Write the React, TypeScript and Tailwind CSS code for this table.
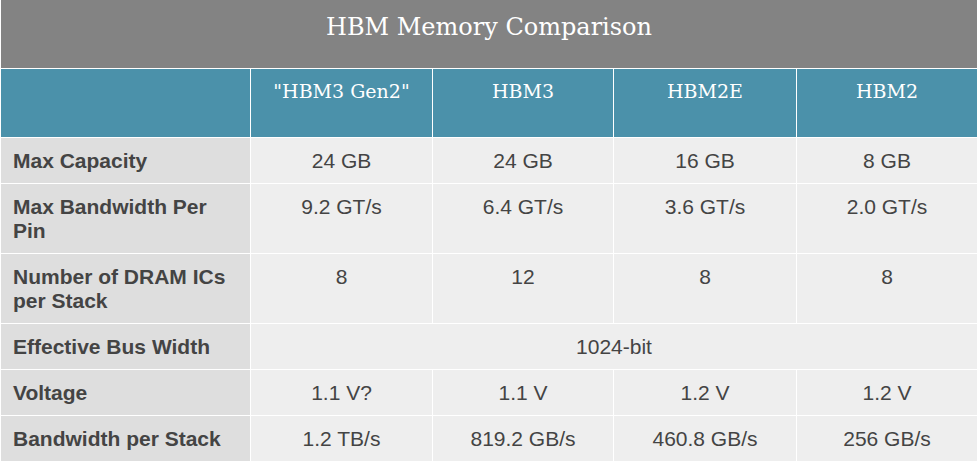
import React from 'react';

const columns = ['"HBM3 Gen2"', 'HBM3', 'HBM2E', 'HBM2'];

const rows: { label: string; values: string[] }[] = [
  { label: 'Max Capacity', values: ['24 GB', '24 GB', '16 GB', '8 GB'] },
  { label: 'Max Bandwidth Per Pin', values: ['9.2 GT/s', '6.4 GT/s', '3.6 GT/s', '2.0 GT/s'] },
  { label: 'Number of DRAM ICs per Stack', values: ['8', '12', '8', '8'] },
  { label: 'Effective Bus Width', values: ['1024-bit'] },
  { label: 'Voltage', values: ['1.1 V?', '1.1 V', '1.2 V', '1.2 V'] },
  { label: 'Bandwidth per Stack', values: ['1.2 TB/s', '819.2 GB/s', '460.8 GB/s', '256 GB/s'] },
];

export default function App() {
  return (
    <div className="w-[978px] h-[463px] bg-white">
      <div className="ml-px w-[976px] h-[68px] bg-[#838383] text-center text-white text-[24px] leading-[30px] pt-[12px] font-['DejaVu_Serif',serif]">
        HBM Memory Comparison
      </div>
      <div className="grid grid-cols-[249px_181px_180px_182px_180px] gap-px px-px pt-px">
        <div className="h-[68px] bg-[#4b91aa]" />
        {columns.map((c) => (
          <div
            key={c}
            className="h-[68px] bg-[#4b91aa] text-center text-white text-[19px] leading-[24px] pt-[10px] font-['DejaVu_Serif',serif]"
          >
            {c}
          </div>
        ))}
        {rows.map((r) => (
          <React.Fragment key={r.label}>
            <div className="bg-[#dedede] pl-[12px] pr-[8px] pt-[11px] pb-[10px] text-[21px] leading-[24px] font-bold text-[#444444] font-['Liberation_Sans',sans-serif]">
              {r.label}
            </div>
            {r.values.map((v, i) => (
              <div
                key={i}
                className={
                  (r.values.length === 1 ? 'col-span-4 ' : '') +
                  "bg-[#eeeeee] text-center pt-[11px] pb-[10px] text-[21px] leading-[24px] text-[#444444] font-['Liberation_Sans',sans-serif]"
                }
              >
                {v}
              </div>
            ))}
          </React.Fragment>
        ))}
      </div>
    </div>
  );
}
